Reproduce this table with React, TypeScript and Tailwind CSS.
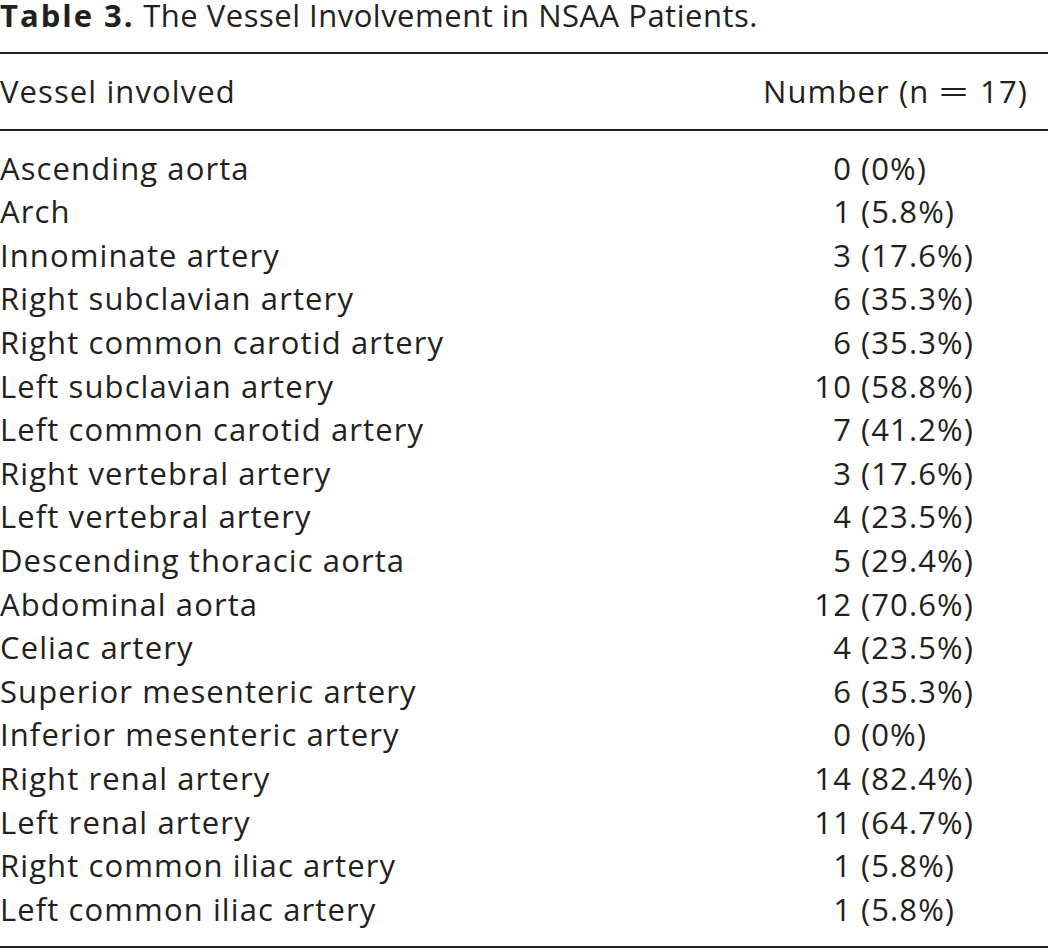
import React from "react";

const rows: [string, string, string][] = [
  ["Ascending aorta", "0", "(0%)"],
  ["Arch", "1", "(5.8%)"],
  ["Innominate artery", "3", "(17.6%)"],
  ["Right subclavian artery", "6", "(35.3%)"],
  ["Right common carotid artery", "6", "(35.3%)"],
  ["Left subclavian artery", "10", "(58.8%)"],
  ["Left common carotid artery", "7", "(41.2%)"],
  ["Right vertebral artery", "3", "(17.6%)"],
  ["Left vertebral artery", "4", "(23.5%)"],
  ["Descending thoracic aorta", "5", "(29.4%)"],
  ["Abdominal aorta", "12", "(70.6%)"],
  ["Celiac artery", "4", "(23.5%)"],
  ["Superior mesenteric artery", "6", "(35.3%)"],
  ["Inferior mesenteric artery", "0", "(0%)"],
  ["Right renal artery", "14", "(82.4%)"],
  ["Left renal artery", "11", "(64.7%)"],
  ["Right common iliac artery", "1", "(5.8%)"],
  ["Left common iliac artery", "1", "(5.8%)"],
];

export default function App() {
  return (
    <div
      className="w-[1048px] h-[950px] bg-white text-[#231f20] overflow-hidden [font-variant-ligatures:none]"
      style={{ fontFamily: "'Open Sans', 'Noto Sans', sans-serif" }}
    >
      <div className="text-[31px] leading-[30px] mb-[22px] tracking-[0.5px] whitespace-nowrap">
        <span className="font-bold tracking-[2px]">Table 3.</span> The Vessel Involvement in NSAA Patients.
      </div>
      <div className="border-t-2 border-[#231f20]" />
      <div className="flex justify-between items-baseline text-[31px] leading-[43.6px] tracking-[1.1px] pt-[16px] pb-[15px] pr-[20px]">
        <span>Vessel involved</span>
        <span className="whitespace-nowrap">
          Number (n<span className="inline-block mx-[16px] scale-x-[1.7]">=</span>17)
        </span>
      </div>
      <div className="border-t-2 border-[#231f20]" />
      <div className="text-[31px] leading-[43.6px] tracking-[1.1px] pt-[16px] pb-[15px]">
        {rows.map(([name, n, pct]) => (
          <div key={name} className="flex whitespace-nowrap">
            <span className="w-[808px]">{name}</span>
            <span className="w-[44px] text-right">{n}</span>
            <span className="pl-[9px]">{pct}</span>
          </div>
        ))}
      </div>
      <div className="border-t-2 border-[#231f20]" />
    </div>
  );
}
